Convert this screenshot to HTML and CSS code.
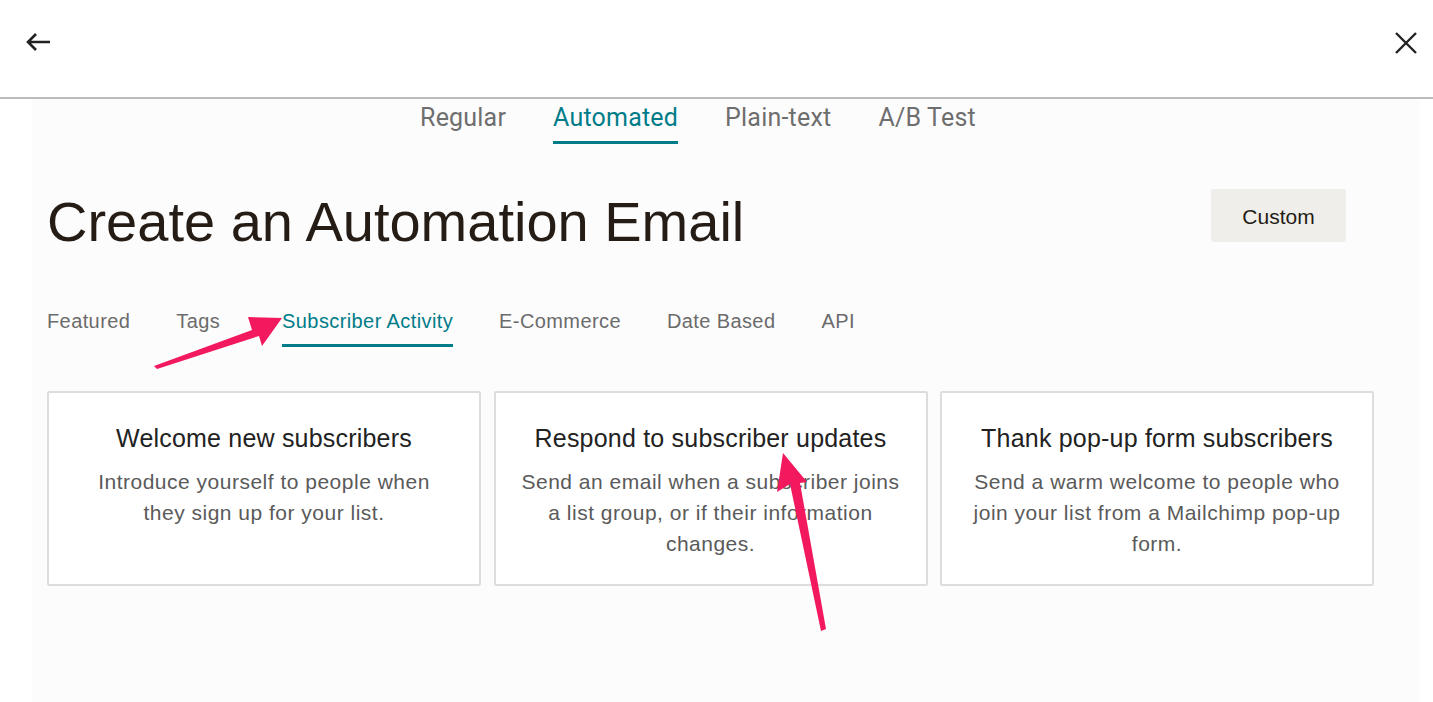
FILE: index.html
```html
<!DOCTYPE html>
<html lang="en">
<head>
<meta charset="utf-8">
<title>Create an Automation Email</title>
<link rel="stylesheet" href="styles.css">
</head>
<body>
<div class="page">
  <header class="topbar">
    <button class="icon-btn back" aria-label="Back">
      <svg width="26" height="20" viewBox="0 0 26 20"><path d="M25 10H3M11 2L3 10l8 8" fill="none" stroke="#222" stroke-width="2.6"/></svg>
    </button>
    <button class="icon-btn close" aria-label="Close">
      <svg width="24" height="24" viewBox="0 0 24 24"><path d="M2 2L22 22M22 2L2 22" fill="none" stroke="#222" stroke-width="2.4"/></svg>
    </button>
  </header>
  <main class="content">
    <nav class="type-tabs">
      <a class="type-tab">Regular</a>
      <a class="type-tab active">Automated</a>
      <a class="type-tab">Plain-text</a>
      <a class="type-tab">A/B Test</a>
    </nav>
    <div class="title-row">
      <h1 class="title">Create an Automation Email</h1>
      <button class="custom-btn">Custom</button>
    </div>
    <nav class="cat-tabs">
      <a class="cat-tab">Featured</a>
      <a class="cat-tab">Tags</a>
      <a class="cat-tab active">Subscriber Activity</a>
      <a class="cat-tab">E-Commerce</a>
      <a class="cat-tab">Date Based</a>
      <a class="cat-tab">API</a>
    </nav>
    <section class="cards">
      <div class="card">
        <h2 class="card-title">Welcome new subscribers</h2>
        <p class="card-desc">Introduce yourself to people when<br>they sign up for your list.</p>
      </div>
      <div class="card">
        <h2 class="card-title">Respond to subscriber updates</h2>
        <p class="card-desc">Send an email when a subscriber joins a list group, or if their information changes.</p>
      </div>
      <div class="card">
        <h2 class="card-title">Thank pop-up form subscribers</h2>
        <p class="card-desc">Send a warm welcome to people who join your list from a Mailchimp pop-up form.</p>
      </div>
    </section>
  </main>
  <svg class="annotations" width="1433" height="702" viewBox="0 0 1433 702">
    <path d="M154 366 L252 330 L248 317 L282 318 L262 346 L259 336 L157 369 Z" fill="#f2195f"/>
    <path d="M783 453 L807 482 L800 483 L826 629 L821 631 L790 484 L777 492 Z" fill="#f2195f"/>
  </svg>
</div>
</body>
</html>
```
FILE: styles.css
```css
* { box-sizing: border-box; }
html, body { margin: 0; padding: 0; }
body {
  background: #ffffff;
  font-family: "Liberation Sans", Arial, sans-serif;
  color: #222;
}
.page {
  position: relative;
  width: 1433px;
  height: 702px;
  overflow: hidden;
}
.topbar {
  height: 99px;
  border-bottom: 2px solid #bdbcbd;
  display: flex;
  justify-content: space-between;
  align-items: flex-start;
  padding: 30px 15px 0 25px;
  background: #fff;
}
.icon-btn {
  border: 0;
  background: none;
  padding: 0;
  display: flex;
}
.back { margin-top: 2px; }
.close { margin-top: 1px; }
.content {
  background: #fdfcfd;
  margin: 0 13px 0 32px;
  height: 603px;
  padding: 0 0 0 15px;
}
.type-tabs {
  display: flex;
  justify-content: center;
  gap: 47px;
  margin-left: -47px;
  margin-right: -13px;
  padding-right: 37px;
  height: 45px;
}
.type-tab {
  font-family: Roboto, "Liberation Sans", sans-serif;
  font-size: 25px;
  color: #6e6e6e;
  padding-top: 4px;
  line-height: 30px;
  height: 45px;
  letter-spacing: 0.2px;
  border-bottom: 3px solid transparent;
}
.type-tab.active {
  color: #007c89;
  border-bottom-color: #007c89;
}
.title-row {
  display: flex;
  justify-content: space-between;
  align-items: flex-start;
  padding-right: 74px;
  margin-top: 44px;
}
.title {
  margin: 0;
  font-family: "Liberation Sans", Arial, sans-serif;
  font-weight: 400;
  font-size: 56px;
  line-height: 74px;
  color: #241c15;
  margin-top: -3px;
  letter-spacing: 0;
}
.custom-btn {
  width: 135px;
  height: 53px;
  margin-top: 1px;
  background: #efeeea;
  border: 0;
  border-radius: 2px;
  font-family: "Liberation Sans", Arial, sans-serif;
  font-size: 21px;
  color: #241c15;
  padding-top: 3px;
}
.cat-tabs {
  display: flex;
  gap: 46px;
  margin-top: 38px;
  height: 50px;
}
.cat-tab {
  font-family: "Liberation Sans", Arial, sans-serif;
  font-size: 20px;
  color: #6b6b6b;
  line-height: 24px;
  height: 50px;
  padding-top: 12px;
  letter-spacing: 0.4px;
  border-bottom: 3px solid transparent;
}
.cat-tab.active {
  color: #007c89;
  border-bottom-color: #007c89;
  margin-left: 16px;
}
.cards {
  display: grid;
  grid-template-columns: repeat(3, 434px);
  gap: 12.5px;
  margin-top: 44px;
}
.card {
  height: 195px;
  border: 2px solid #dedddd;
  border-radius: 2px;
  background: #fff;
  text-align: center;
  padding: 30px 18px 0;
}
.card-title {
  margin: 0;
  font-weight: 400;
  font-size: 25px;
  line-height: 30px;
  color: #222;
  letter-spacing: 0.2px;
}
.card-desc {
  margin: 13px 0 0;
  font-size: 21px;
  line-height: 31px;
  color: #5a5a5a;
  letter-spacing: 0.5px;
}
.annotations {
  position: absolute;
  left: 0;
  top: 0;
  pointer-events: none;
}
```
